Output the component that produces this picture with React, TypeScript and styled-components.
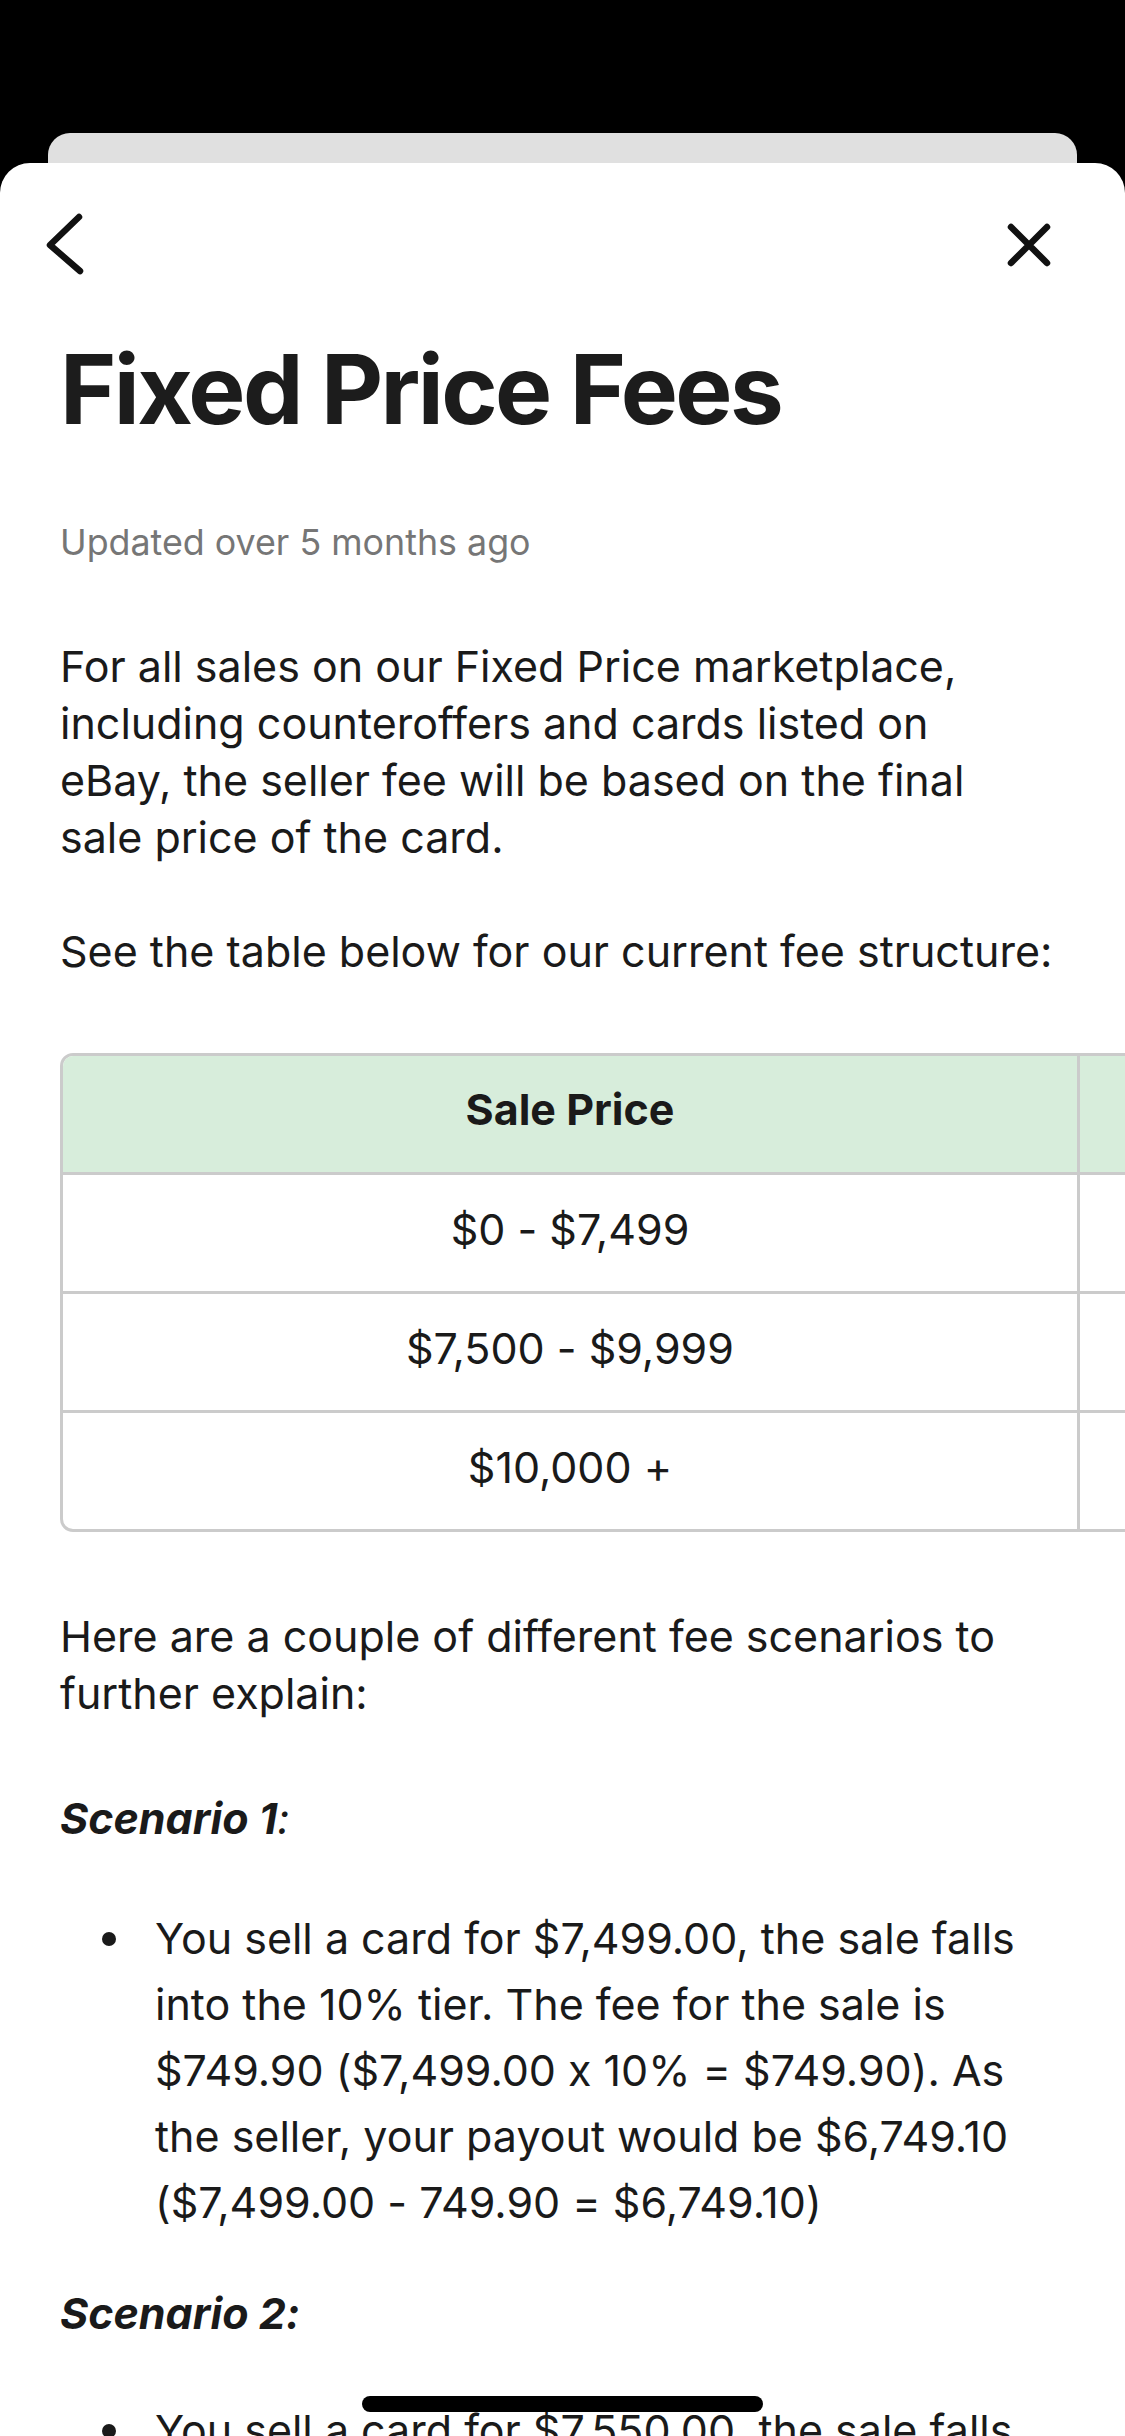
import React from "react";
import styled, { createGlobalStyle } from "styled-components";

const Global = createGlobalStyle`
  html, body {
    margin: 0;
    padding: 0;
    background: #000;
    width: 1125px;
    height: 2436px;
    overflow: hidden;
  }
  * { box-sizing: border-box; }
`;

const Screen = styled.div`
  width: 1125px;
  height: 2436px;
  background: #000;
  padding-top: 133px;
  overflow: hidden;
  position: relative;
  font-family: Inter, "Liberation Sans", Arial, sans-serif;
  font-feature-settings: "calt" 0;
`;

const BackCard = styled.div`
  height: 30px;
  margin: 0 48px;
  background: #e0e0e0;
  border-radius: 22px 22px 0 0;
`;

const Sheet = styled.div`
  background: #fff;
  border-radius: 30px 30px 0 0;
  min-height: 2300px;
  overflow: hidden;
`;

const NavBar = styled.div`
  display: flex;
  justify-content: space-between;
  align-items: flex-start;
  padding: 48px 71px 0 44px;
`;

const IconButton = styled.button<{ $offset?: number }>`
  background: none;
  border: 0;
  padding: 0;
  margin-top: ${(p) => p.$offset ?? 0}px;
  display: flex;
  color: #111;
`;

const Content = styled.div`
  padding: 0 60px;
  color: #1a1a1a;
`;

const Title = styled.h1`
  margin: 59px 0 0;
  font-size: 96px;
  line-height: 110px;
  font-weight: 700;
  letter-spacing: -2.6px;
  color: #1c1c1c;
`;

const Updated = styled.div`
  margin-top: 74px;
  font-size: 35.8px;
  line-height: 48px;
  color: #767676;
`;

const Para = styled.p<{ $mt: number; $maxW?: number }>`
  margin: ${(p) => p.$mt}px 0 0;
  max-width: ${(p) => (p.$maxW ? `${p.$maxW}px` : "none")};
  font-size: 43px;
  line-height: 57px;
  font-weight: 400;
`;

const TableScroll = styled.div`
  margin: 73px -60px 0 0;
  overflow: hidden;
`;

const Table = styled.table`
  border-collapse: separate;
  border-spacing: 0;
  width: 1620px;
  border: 3px solid #cbcbcb;
  border-radius: 13px;
  overflow: hidden;
  table-layout: fixed;
  font-size: 43px;
`;

const HeadCell = styled.th<{ $w: number }>`
  width: ${(p) => p.$w}px;
  height: 119px;
  background: #d7eddb;
  font-weight: 700;
  color: #1a1a1a;
  text-align: center;
  vertical-align: middle;
  padding: 0 0 10px;
  border-right: 3px solid #cbcbcb;
  border-bottom: 3px solid #cbcbcb;
`;

const Cell = styled.td<{ $last?: boolean }>`
  height: ${(p) => (p.$last ? 116 : 119)}px;
  text-align: center;
  vertical-align: middle;
  padding: 0 0 8px;
  color: #1a1a1a;
  border-right: 3px solid #cbcbcb;
  border-bottom: ${(p) => (p.$last ? "0" : "3px solid #cbcbcb")};
`;

const Label = styled.p<{ $mt: number }>`
  margin: ${(p) => p.$mt}px 0 0;
  font-size: 43px;
  line-height: 57px;
  font-style: italic;
  font-weight: 400;
`;

const List = styled.ul<{ $mt: number }>`
  list-style: none;
  margin: ${(p) => p.$mt}px 0 0;
  padding: 0;
`;

const Item = styled.li`
  display: flex;
  align-items: flex-start;
  font-size: 43px;
  line-height: 66px;
`;

const Dot = styled.span`
  flex: none;
  width: 14px;
  height: 14px;
  border-radius: 50%;
  background: #1a1a1a;
  margin: 27px 39px 0 42px;
`;

const ItemText = styled.span`
  flex: 1;
`;

const HomeIndicator = styled.div`
  position: absolute;
  left: 362px;
  bottom: 24px;
  width: 401px;
  height: 16px;
  border-radius: 8px;
  background: #000;
`;

const BackIcon = () => (
  <svg width="44" height="64" viewBox="0 0 44 64" fill="none">
    <path d="M35 6 L6 34 L36 60" stroke="currentColor" strokeWidth="6.5" strokeLinecap="round" strokeLinejoin="round" />
  </svg>
);

const CloseIcon = () => (
  <svg width="50" height="50" viewBox="0 0 50 50" fill="none">
    <path d="M7 7 L43 43 M43 7 L7 43" stroke="currentColor" strokeWidth="6.5" strokeLinecap="round" />
  </svg>
);

const rows = ["$0 - $7,499", "$7,500 - $9,999", "$10,000 +"];

export default function App() {
  return (
    <>
      <Global />
      <Screen>
        <BackCard />
        <Sheet>
          <NavBar>
            <IconButton aria-label="Back">
              <BackIcon />
            </IconButton>
            <IconButton aria-label="Close" $offset={9}>
              <CloseIcon />
            </IconButton>
          </NavBar>
          <Content>
            <Title>Fixed Price Fees</Title>
            <Updated>Updated over 5 months ago</Updated>
            <Para $mt={72} $maxW={950}>
              For all sales on our Fixed Price marketplace, including counteroffers and cards listed on
              eBay, the seller fee will be based on the final sale price of the card.
            </Para>
            <Para $mt={57}>See the table below for our current fee structure:</Para>
            <TableScroll>
              <Table>
                <thead>
                  <tr>
                    <HeadCell $w={1017}>Sale Price</HeadCell>
                    <HeadCell $w={597}></HeadCell>
                  </tr>
                </thead>
                <tbody>
                  {rows.map((r, i) => (
                    <tr key={r}>
                      <Cell $last={i === rows.length - 1}>{r}</Cell>
                      <Cell $last={i === rows.length - 1}></Cell>
                    </tr>
                  ))}
                </tbody>
              </Table>
            </TableScroll>
            <Para $mt={76}>Here are a couple of different fee scenarios to further explain:</Para>
            <Label $mt={68}>
              <strong>Scenario 1</strong>:
            </Label>
            <List $mt={58}>
              <Item>
                <Dot />
                <ItemText>
                  You sell a card for $7,499.00, the sale falls into the 10% tier. The fee for the sale is
                  $749.90 ($7,499.00 x 10% = $749.90). As the seller, your payout would be $6,749.10
                  ($7,499.00 - 749.90 = $6,749.10)
                </ItemText>
              </Item>
            </List>
            <Label $mt={50}>
              <strong>Scenario 2:</strong>
            </Label>
            <List $mt={55}>
              <Item>
                <Dot />
                <ItemText>You sell a card for $7,550.00, the sale falls</ItemText>
              </Item>
            </List>
          </Content>
        </Sheet>
        <HomeIndicator />
      </Screen>
    </>
  );
}
